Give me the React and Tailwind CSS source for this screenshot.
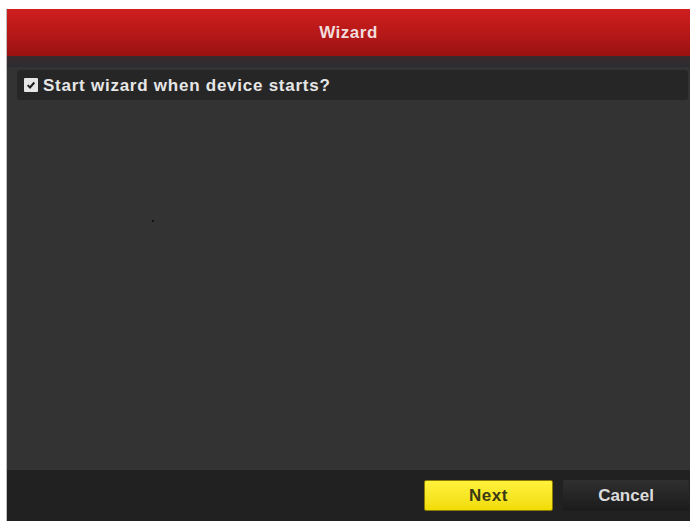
export default function App() {
  return (
    <div className="h-[521px] w-[695px] bg-white pl-[6px] pr-[5px] pt-[9px] font-['Liberation_Sans',Arial,sans-serif]">
      <div className="flex h-full flex-col border-l border-[#bdbdbd] bg-[#333333]">
        <header className="flex h-[47px] items-center justify-center bg-gradient-to-b from-[#cf1f1f] via-[#b81818] to-[#9a1212]">
          <span className="text-[17px] font-bold tracking-[0.5px] text-[#f1dcdc]">Wizard</span>
        </header>
        <div className="h-[11px] bg-gradient-to-b from-[#3a2a2c] to-[#2b2d32]" />

        <main className="flex flex-1 flex-col pl-[10px] pr-[2px] pt-[3px]">
          <div className="flex h-[30px] items-center gap-[5px] rounded-[3px] bg-[#262626] pl-[7px]">
            <span className="flex h-[14px] w-[14px] items-center justify-center rounded-[1px] bg-[#e6e6e6]">
              <svg viewBox="0 0 12 12" className="h-[10px] w-[10px]">
                <path d="M2 6.2 L4.8 9 L10 3" fill="none" stroke="#1e1e1e" strokeWidth="2.4" />
              </svg>
            </span>
            <span className="text-[17px] font-bold leading-none tracking-[0.75px] text-[#e6e6e6]">
              Start wizard when device starts?
            </span>
          </div>
          <div className="relative flex-1">
            <span className="absolute left-[135px] top-[120px] h-[2px] w-[2px] bg-[#111]" />
          </div>
        </main>

        <footer className="flex h-[51px] items-center justify-end gap-[10px] bg-[#212121] pr-[1px]">
          <button className="flex h-[31px] w-[129px] items-center justify-center rounded-[2px] border border-[#8a7d00] bg-gradient-to-b from-[#fff23a] to-[#f1dc00] text-[17px] font-bold tracking-[0.5px] text-[#3a3a14]">
            Next
          </button>
          <button className="flex h-[31px] w-[126px] items-center justify-center rounded-[2px] bg-gradient-to-b from-[#303030] to-[#1b1b1b] text-[17px] font-bold text-[#dcdcdc]">
            Cancel
          </button>
        </footer>
      </div>
    </div>
  );
}
